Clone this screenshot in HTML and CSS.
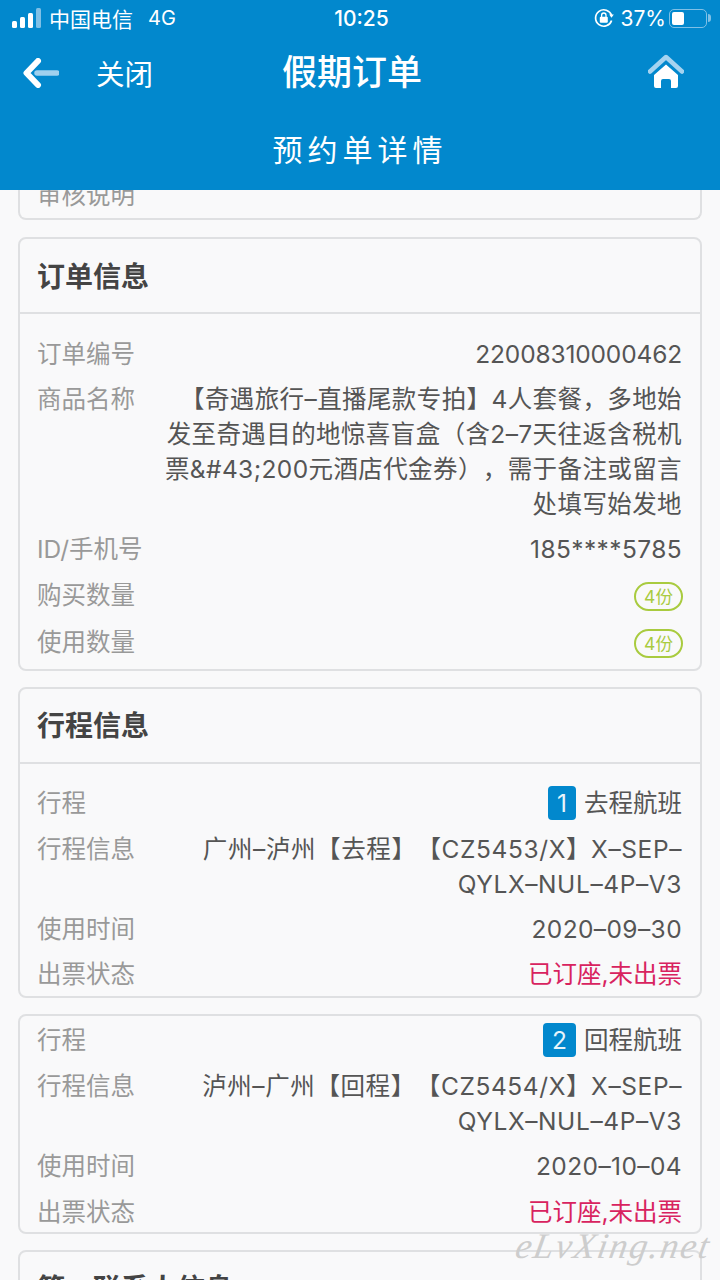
FILE: index.html
```html
<!DOCTYPE html>
<html lang="zh-CN">
<head>
    <meta charset="UTF-8">
    <meta name="viewport" content="width=device-width, initial-scale=1.0">
    <title>假期订单</title>
    <link rel="stylesheet" href="styles.css">
</head>
<body>
    <header class="top">
        <div class="status">
            <div class="status-left">
                <svg class="signal" width="29" height="20" viewBox="0 0 29 20">
                    <rect x="0" y="13" width="5" height="7" rx="1.5" fill="#fff"/>
                    <rect x="8" y="9" width="5" height="11" rx="1.5" fill="#fff"/>
                    <rect x="16" y="5" width="5" height="15" rx="1.5" fill="#fff"/>
                    <rect x="24" y="0" width="5" height="20" rx="1.5" fill="#7fc0e6"/>
                </svg>
                <span>中国电信</span>
                <span class="net">4G</span>
            </div>
            <div class="clock">10:25</div>
            <div class="status-right">
                <svg class="lock" width="20" height="20" viewBox="0 0 20 20">
                    <path d="M17.6 7.5A8.2 8.2 0 1 0 17.6 12.5" fill="none" stroke="#fff" stroke-width="1.7"/>
                    <path d="M15.2 6.6l4.6 0-2.3 3.2z" fill="#fff"/>
                    <rect x="5.8" y="8.8" width="8" height="6" rx="1" fill="#fff"/>
                    <path d="M7.6 9V7.2a2.2 2.2 0 0 1 4.4 0V9" fill="none" stroke="#fff" stroke-width="1.3"/>
                </svg>
                <span class="percent">37%</span>
                <div class="battery"><div class="battery-level"></div></div>
                <div class="battery-tip"></div>
            </div>
        </div>
        <div class="nav">
            <div class="nav-left">
                <svg width="36" height="30" viewBox="0 0 36 30">
                    <path d="M14 15H34" stroke="#9fd0ee" stroke-width="5.5" stroke-linecap="round"/>
                    <path d="M15 3L3.5 15 15 27" fill="none" stroke="#fff" stroke-width="6" stroke-linecap="round" stroke-linejoin="round"/>
                </svg>
                <span class="close">关闭</span>
            </div>
            <h1>假期订单</h1>
            <svg class="home" width="36" height="36" viewBox="0 0 36 36">
                <path d="M2 17.5L18 3l16 14.5" fill="none" stroke="#a5d3f0" stroke-width="4.5" stroke-linecap="round" stroke-linejoin="round"/>
                <path d="M18 10.5L30 21v11a2 2 0 0 1-2 2h-5v-7a2 2 0 0 0-2-2h-6a2 2 0 0 0-2 2v7H8a2 2 0 0 1-2-2V21z" fill="#fff"/>
            </svg>
        </div>
        <h2>预约单详情</h2>
    </header>

    <main class="content">
        <section class="card card-clipped">
            <div class="row"><span class="label">审核说明</span></div>
        </section>

        <section class="card">
            <h3>订单信息</h3>
            <div class="rows">
                <div class="row"><span class="label">订单编号</span><span class="value order-no">22008310000462</span></div>
                <div class="row"><span class="label">商品名称</span><span class="value">【奇遇旅行–直播尾款专拍】4人套餐，多地始<br>发至奇遇目的地惊喜盲盒（含2–7天往返含税机<br>票&amp;#43;200元酒店代金券），需于备注或留言<br>处填写始发地</span></div>
                <div class="row"><span class="label">ID/手机号</span><span class="value">185****5785</span></div>
                <div class="row row-tag"><span class="label">购买数量</span><span class="tag">4份</span></div>
                <div class="row row-tag"><span class="label">使用数量</span><span class="tag">4份</span></div>
            </div>
        </section>

        <section class="card">
            <h3>行程信息</h3>
            <div class="rows">
                <div class="row"><span class="label">行程</span><span class="value trip"><b class="num">1</b>去程航班</span></div>
                <div class="row"><span class="label">行程信息</span><span class="value flight">广州–泸州【去程】【CZ5453/X】X–SEP–<br>QYLX–NUL–4P–V3</span></div>
                <div class="row"><span class="label">使用时间</span><span class="value">2020–09–30</span></div>
                <div class="row"><span class="label">出票状态</span><span class="value red">已订座,未出票</span></div>
            </div>
        </section>

        <section class="card">
            <div class="rows rows-plain">
                <div class="row"><span class="label">行程</span><span class="value trip"><b class="num">2</b>回程航班</span></div>
                <div class="row"><span class="label">行程信息</span><span class="value flight">泸州–广州【回程】【CZ5454/X】X–SEP–<br>QYLX–NUL–4P–V3</span></div>
                <div class="row"><span class="label">使用时间</span><span class="value">2020–10–04</span></div>
                <div class="row"><span class="label">出票状态</span><span class="value red">已订座,未出票</span></div>
            </div>
        </section>

        <section class="card">
            <h3>第一联系人信息</h3>
        </section>
    </main>

    <div class="mark">eLvXing.net</div>
</body>
</html>
```

FILE: styles.css
```css
* {
    box-sizing: border-box;
}
html, body {
    margin: 0;
    height: 1280px;
    overflow: hidden;
}
body {
    position: relative;
    display: flex;
    flex-direction: column;
    font-family: Inter, "Noto Sans CJK SC", sans-serif;
    text-spacing-trim: space-all;
    background-color: #f9f9fa;
    color: #555;
}
.top {
    flex: none;
    height: 190px;
    background-color: #0288cd;
    color: #fff;
}
.status {
    height: 36px;
    padding: 0 9px 0 12px;
    display: flex;
    align-items: center;
    justify-content: space-between;
    font-size: 21px;
}
.status-left, .status-right {
    flex: 1;
    display: flex;
    align-items: center;
}
.status-left span {
    margin-left: 8px;
}
.status-left .net {
    margin-left: 15px;
    font-size: 20px;
}
.status-right {
    justify-content: flex-end;
    gap: 5px;
}
.lock {
    margin-right: 2px;
}
.percent {
    margin-right: -2px;
}
.clock {
    font-weight: 500;
}
.battery {
    width: 38px;
    height: 19px;
    padding: 2px;
    border: 1.5px solid #7fc0e6;
    border-radius: 5px;
}
.battery-level {
    width: 12px;
    height: 100%;
    background-color: #fff;
    border-radius: 2px;
}
.battery-tip {
    width: 3px;
    height: 8px;
    margin-left: -4px;
    background-color: #7fc0e6;
    border-radius: 0 3px 3px 0;
}
.nav {
    height: 70px;
    padding: 0 36px 0 23px;
    display: flex;
    align-items: center;
    justify-content: space-between;
    position: relative;
}
.nav-left {
    display: flex;
    align-items: center;
    padding-top: 3px;
}
.close {
    margin-left: 37px;
    font-size: 28.5px;
}
.home {
    margin-top: 1px;
}
.top h1 {
    margin: -4px 0 0;
    position: absolute;
    left: 0;
    right: 16px;
    text-align: center;
    font-size: 35px;
    font-weight: 500;
    pointer-events: none;
}
.top h2 {
    margin: 22px 0 0;
    text-align: center;
    font-size: 30px;
    font-weight: 400;
    letter-spacing: 5px;
    line-height: 44px;
}
.content {
    flex: 1;
    min-height: 0;
    overflow: hidden;
    padding: 0 18px;
}
.card {
    margin-bottom: 16px;
    background-color: #f9f9fa;
    border: 2px solid #dfe0e2;
    border-radius: 8px;
}
.card-clipped {
    display: flow-root;
    height: 31px;
    margin-top: -1px;
    margin-bottom: 17px;
    border-top: none;
    border-radius: 0 0 8px 8px;
}
.card-clipped .row {
    margin-top: -11px;
    padding-left: 17px;
}
.card h3 {
    margin: 0;
    height: 75px;
    padding: 0 17px 2px;
    display: flex;
    align-items: center;
    font-size: 28px;
    font-weight: 700;
    color: #444;
    border-bottom: 2px solid #dfe0e2;
}
.rows {
    padding: 22.5px 18px 4px 17px;
}
.rows-plain {
    padding-top: 7px;
    padding-bottom: 2px;
}
.row {
    display: flex;
    justify-content: space-between;
    margin-bottom: 10.4px;
    font-size: 24.5px;
    line-height: 35px;
}
.row:last-child {
    margin-bottom: 0;
}
.row-tag {
    align-items: center;
    height: 36px;
    margin-bottom: 11px;
}
.row-tag:last-child {
    margin-bottom: 4px;
}
.label {
    flex: none;
    color: #999;
}
.value {
    text-align: right;
    color: #555;
    letter-spacing: 0.4px;
}
.order-no {
    letter-spacing: -0.15px;
}
.flight {
    letter-spacing: 0.6px;
}
.trip, .red {
    letter-spacing: 0;
}
.red {
    color: #d8235f;
}
.num {
    display: inline-block;
    height: 34px;
    padding: 0 9px;
    margin-right: 8px;
    vertical-align: top;
    background-color: #0288cd;
    border-radius: 4px;
    color: #e6f4fb;
    font-weight: 400;
    line-height: 34px;
}
.tag {
    width: 49px;
    height: 29px;
    margin: 2px -1px 0 0;
    border: 2px solid #a9cb3f;
    border-radius: 15px;
    color: #a9cb3f;
    font-size: 17.5px;
    line-height: 25px;
    text-align: center;
}
/* site name stamped over the corner of the page */
.mark {
    position: absolute;
    right: 9px;
    bottom: 13px;
    font-family: "Liberation Serif", serif;
    font-style: italic;
    font-size: 36px;
    letter-spacing: 2px;
    color: #cdcdcd;
    transform: skewX(-10deg);
}
```
